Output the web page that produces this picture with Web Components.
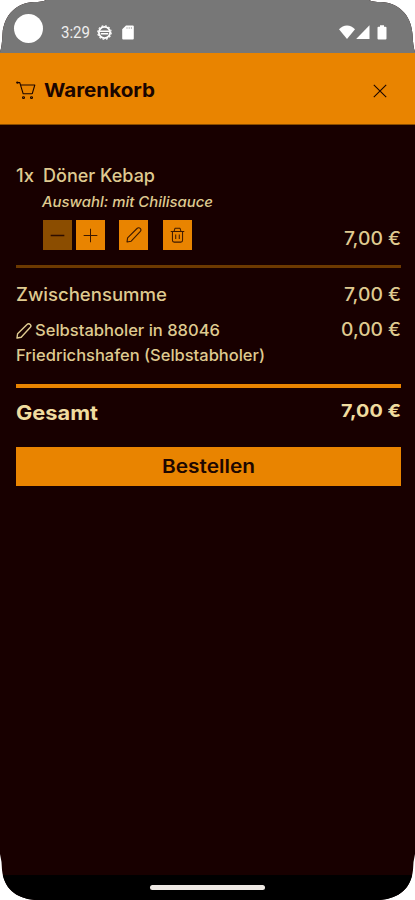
<!DOCTYPE html>
<html lang="de"><head><meta charset="utf-8"><title>Warenkorb</title>
<style>
html,body{margin:0;height:100%;background:#fff;overflow:hidden}
</style></head><body>
<phone-screen></phone-screen>
<script>
const define=(name,html,ready)=>customElements.define(name,class extends HTMLElement{
  constructor(){super();this.attachShadow({mode:'open'}).innerHTML=html;}
  connectedCallback(){if(ready)ready(this);}
});

/* Icons, chosen by the name attribute */
const icons={
 cart:[20,20,'<path d="M0.8 1.7h3l3.4 11.8h9M4.6 4.2h14.2l-2.600 9.300" /><circle cx="7.500" cy="17.500" r="1"/><circle cx="15.500" cy="17.500" r="1"/><circle cx="1.300" cy="1.700" r=".6"/>'],
 close:[14,14,'<path d="M.8.8l12.4 12.4M13.2.8L.8 13.2"/>'],
 minus:[16,16,'<path d="M.7 8h14.6"/>'],
 plus:[16,16,'<path d="M.7 8h14.6M8 .7v14.6"/>'],
 pencil:[16,16,'<path d="M1 15l.6-4.200L11 1.500c1-1 2.300-1 3.200-.1s.9 2.200-.1 3.200L5.200 14.200z"/>'],
 trash:[16,16,'<path d="M.8 4.500h14.4M4.3 4.300l1-3h5.4l1 3M2.6 4.500v8.700c0 1.2.7 1.9 1.8 1.9h7.2c1.1 0 1.8-.7 1.8-1.9V4.500M6.1 7.500v4.500M9.9 7.500v4.500"/>'],
 globe:[16,16,'<circle cx="8" cy="8" r="6" stroke-width="1.9"/><circle cx="8" cy="8" r="7.2" stroke-width="1.2" stroke-dasharray="2 1.8"/><path d="M3 6.6h10M4 9.4h8" stroke-width="1.5"/>'],
 sd:[12,15,'<path fill="currentColor" stroke="none" d="M4 .5h6.8q1 0 1 1v12q0 1-1 1H1.2q-1 0-1-1V4.3z"/><path d="M5 2v2M7.2 2v2M9.4 2v2" stroke="#aaa" stroke-width=".8"/>'],
 wifi:[16,14,'<path fill="currentColor" stroke="none" d="M8 14L0 4.3Q3.4.4 8 .4t8 3.9z"/>'],
 signal:[14,14,'<path fill="currentColor" stroke="none" d="M13.5.3V14H.2z"/>'],
 battery:[10,15,'<path fill="currentColor" stroke="none" d="M3 .3h4v1.4h1.5q1 0 1 1v10.8q0 1-1 1h-7q-1 0-1-1V2.700q0-1 1-1H3z"/>']
};
define('ui-icon','<style>:host{display:block;flex:none}svg{display:block}</style><span></span>',el=>{
  const [w,h,p]=icons[el.getAttribute('name')];
  const W=+(el.getAttribute('w')||w),H=+(el.getAttribute('h')||h);
  el.shadowRoot.querySelector('span').innerHTML=`<svg width="${W}" height="${H}" viewBox="0 0 ${w} ${h}" preserveAspectRatio="none" fill="none" stroke="currentColor" stroke-width="${el.getAttribute('sw')||1.1}" stroke-linejoin="round">${p}</svg>`;
});

/* One line of text stretched to fill the given width */
define('fit-text','<style>:host{display:block;white-space:nowrap;flex:none}span{display:inline-block;transform-origin:0 50%}</style><span><slot></slot></span>',el=>{
  const w=+el.getAttribute('width'),s=el.shadowRoot.querySelector('span');
  el.style.width=w+'px';
  s.style.transform='scaleX('+w/s.getBoundingClientRect().width+')';
});

define('status-bar',`<style>:host{display:flex;height:53px;box-sizing:border-box;background:#777;color:#fff;padding:0 28px 0 14px;align-items:flex-start}
.cam{width:29px;height:29px;border-radius:50%;background:#fff;margin:14px 18px 0 0}
fit-text{font-family:Roboto,sans-serif;font-weight:400;font-size:16px;line-height:20px;margin-top:23px;color:#eee}
.g{margin:25px 0 0 7px}.s{margin:25px auto 0 10px}.r{margin-top:25px}</style>
<div class="cam"></div><fit-text width="29">3:29</fit-text><ui-icon class="g" name="globe" w="15" h="15"></ui-icon><ui-icon class="s" name="sd"></ui-icon>
<ui-icon class="r" name="wifi"></ui-icon><ui-icon class="r" style="margin-left:1px" name="signal"></ui-icon><ui-icon class="r" style="margin-left:7px;margin-right:0" name="battery"></ui-icon>`);

define('cart-header',`<style>:host{display:flex;align-items:center;height:72px;box-sizing:border-box;background:#e98400;color:#1a0500;padding:4px 28px 0 16px;border-bottom:1px solid #8a4d00}
fit-text{font-size:19px;font-weight:650;line-height:24px;margin:1px auto 0 8px}</style>
<ui-icon name="cart" w="20" h="19"></ui-icon><fit-text width="111">Warenkorb</fit-text><ui-icon name="close"></ui-icon>`);

define('icon-button',`<style>:host{display:flex;align-items:center;justify-content:center;width:29px;height:30px;background:#e98400;color:#3d1900}
:host([disabled]){background:#8b4d00;color:#2d0e00}</style><slot></slot>`);

define('cart-item',`<style>:host{display:grid;grid-template-columns:1fr auto;border-bottom:3px solid #6c3900;height:103.500px;box-sizing:border-box}
.name{display:flex;gap:9px;font-size:18px;line-height:24px}
.note{font-size:14.500px;line-height:20px;font-style:italic;margin:4px 0 0 26px}
.tools{display:flex;margin:8px 0 0 26.500px}
.price{align-self:end;line-height:24px;margin-bottom:14px}</style>
<div><div class="name"><fit-text width="18">1x</fit-text><fit-text width="112">Döner Kebap</fit-text></div>
<div class="note"><fit-text width="171">Auswahl: mit Chilisauce</fit-text></div>
<div class="tools"><icon-button disabled><ui-icon name="minus" w="15" h="15" sw="1.4"></ui-icon></icon-button><icon-button style="margin-left:4px"><ui-icon name="plus" w="15" h="15"></ui-icon></icon-button><icon-button style="margin-left:14.500px"><ui-icon name="pencil"></ui-icon></icon-button><icon-button style="margin-left:14.500px"><ui-icon name="trash" w="15"></ui-icon></icon-button></div></div>
<fit-text class="price" width="57">7,00 €</fit-text>`);

define('sum-row',`<style>:host{display:flex;justify-content:space-between;align-items:flex-start;font-size:18px;line-height:24px}</style><slot></slot><slot name="price"></slot>`);

define('order-button',`<style>:host{display:flex;align-items:center;justify-content:center;height:39px;background:#e98400;color:#1d0700;font-size:18.500px;font-weight:600;line-height:24px}</style><slot></slot>`);

define('cart-body',`<style>:host{display:block;flex:1;padding:39px 14.500px 0 16px;color:#dfca90;box-sizing:border-box;font-size:18px}
.addr{font-size:16px;line-height:25px}.first{display:flex;gap:3px;align-items:center}
.total{border-top:4.500px solid #e98400;padding-top:11px;font-weight:700;color:#f0dc9f}</style>
<cart-item></cart-item>
<sum-row style="margin-top:15.500px"><fit-text width="151">Zwischensumme</fit-text><fit-text slot="price" width="57">7,00 €</fit-text></sum-row>
<sum-row style="margin-top:11px;height:55px"><div class="addr"><div class="first"><ui-icon name="pencil" sw="1.4"></ui-icon><fit-text width="185">Selbstabholer in 88046</fit-text></div><fit-text width="249">Friedrichshafen (Selbstabholer)</fit-text></div><fit-text slot="price" width="60">0,00 €</fit-text></sum-row>
<sum-row class="total" style="margin-top:11px"><fit-text style="font-size:20px;margin-top:2px" width="82">Gesamt</fit-text><fit-text slot="price" style="font-size:18px" width="60">7,00 €</fit-text></sum-row>
<order-button style="margin-top:21.500px"><fit-text width="93">Bestellen</fit-text></order-button>`);

define('nav-bar',`<style>:host{display:flex;justify-content:center;height:25px;background:#000}div{width:115px;height:5px;border-radius:3px;background:#eee9e4;margin-top:10px}</style><div></div>`);

define('phone-screen',`<style>:host{display:flex;flex-direction:column;width:415px;height:900px;background:#180000;overflow:hidden;clip-path:path("M0 52Q2 46 2.500 34C4 14 17 3 34 2Q42 2 46 0H369Q373 2 381 2C398 3 411 14 412.500 34Q413 46 415 52V854Q413 862 413 870C411 888 400 898 380 900H35C15 898 4 888 2 870Q2 862 0 854Z");font-family:Inter,"Noto Sans",sans-serif;font-weight:500}</style>
<status-bar></status-bar><cart-header></cart-header><cart-body></cart-body><nav-bar></nav-bar>`);
</script></body></html>
